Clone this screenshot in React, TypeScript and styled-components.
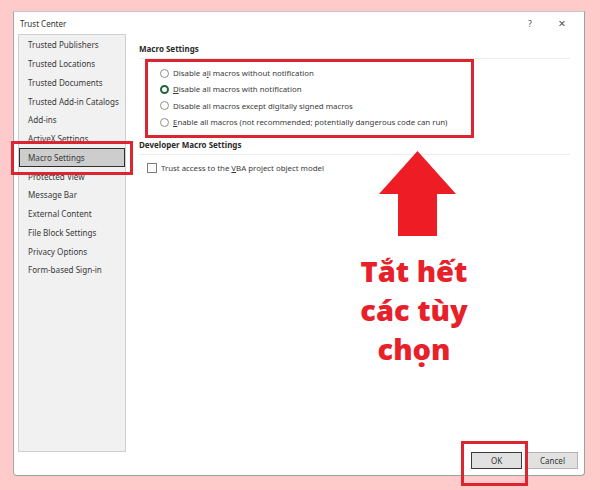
import React from "react";
import styled, { createGlobalStyle } from "styled-components";

const Global = createGlobalStyle`
  html, body { margin: 0; padding: 0; }
  body { background: #ffcaca; font-family: "Noto Sans", "Open Sans", sans-serif; }
`;

const Page = styled.div`
  position: relative;
  width: 600px;
  height: 490px;
  padding: 11px 0 0 13px;
  box-sizing: border-box;
`;

const Dialog = styled.div`
  width: 572px;
  height: 465px;
  box-sizing: border-box;
  background: #fff;
  border: 1px solid #93a79d;
  border-left-color: #a8a8a8;
  border-top-color: #c8c8c8;
  border-radius: 0 0 4px 4px;
  display: flex;
  flex-direction: column;
`;

const TitleBar = styled.div`
  height: 22px;
  display: flex;
  align-items: center;
  padding: 0 0 0 6px;
  font-size: 8px;
  color: #333;
`;

const Title = styled.div`
  flex: 1;
`;

const TitleButton = styled.div<{ $w: number }>`
  width: ${(p) => p.$w}px;
  text-align: center;
  color: #555;
  font-size: ${(p) => (p.$w > 30 ? 13 : 9)}px;
`;

const Body = styled.div`
  flex: 1;
  display: flex;
  padding-left: 4px;
  min-height: 0;
`;

const Nav = styled.div`
  width: 108px;
  height: 418px;
  box-sizing: border-box;
  background: #f1f1f1;
  border: 1px solid #cfcfcf;
  padding-top: 0.6px;
  display: flex;
  flex-direction: column;
`;

const NavItem = styled.div<{ $sel?: boolean }>`
  height: 18.75px;
  box-sizing: border-box;
  display: flex;
  align-items: center;
  padding-left: 8px;
  font-size: 8.1px;
  color: #3a3a3a;
  white-space: nowrap;
  background: ${(p) => (p.$sel ? "#cdcdcd" : "transparent")};
  border: 1px solid ${(p) => (p.$sel ? "#2f2f2f" : "transparent")};
`;

const Content = styled.div`
  flex: 1;
  padding: 9px 14px 0 13px;
  display: flex;
  flex-direction: column;
`;

const Heading = styled.div<{ $mt: number }>`
  margin-top: ${(p) => p.$mt}px;
  font-size: 8px;
  font-weight: 700;
  line-height: 12px;
  color: #2a2a2a;
  padding-bottom: 3px;
  border-bottom: 1px solid #ececec;
`;

const RadioList = styled.div`
  margin-top: 6px;
  padding-left: 21px;
  display: flex;
  flex-direction: column;
`;

const Row = styled.div<{ $h: number }>`
  height: ${(p) => p.$h}px;
  display: flex;
  align-items: center;
  gap: 4px;
  font-size: 7.85px;
  color: #3a3a3a;
  white-space: nowrap;
`;

const Radio = styled.span<{ $on?: boolean }>`
  width: 9px;
  height: 9px;
  box-sizing: border-box;
  border-radius: 50%;
  background: #fff;
  border: ${(p) => (p.$on ? "2.5px solid #236440" : "1px solid #8e8e8e")};
  flex: none;
`;

const CheckRow = styled(Row)`
  margin-top: 5px;
  padding-left: 8px;
  gap: 4px;
`;

const Check = styled.span`
  width: 10px;
  height: 10px;
  box-sizing: border-box;
  border: 1px solid #7a7a7a;
  background: #fff;
  flex: none;
`;

const Footer = styled.div`
  height: 23px;
  display: flex;
  justify-content: flex-end;
  align-items: flex-start;
  gap: 5px;
  padding: 1px 6px 0 0;
`;

const Button = styled.div<{ $def?: boolean }>`
  width: 51px;
  height: 17px;
  box-sizing: border-box;
  display: flex;
  align-items: center;
  justify-content: center;
  font-size: 8px;
  color: #333;
  background: #e1e1e1;
  border: ${(p) => (p.$def ? "1.5px solid #3a3a3a" : "1px solid #b4b4b4")};
`;

const Mark = styled.div<{ $x: number; $y: number; $w: number; $h: number }>`
  position: absolute;
  left: ${(p) => p.$x}px;
  top: ${(p) => p.$y}px;
  width: ${(p) => p.$w}px;
  height: ${(p) => p.$h}px;
  box-sizing: border-box;
  border: 3px solid #dc2530;
  pointer-events: none;
`;

const Arrow = styled.svg`
  position: absolute;
  left: 379px;
  top: 151px;
`;

const Caption = styled.div`
  position: absolute;
  left: 344px;
  top: 251px;
  width: 140px;
  text-align: center;
  font-family: "Open Sans", "Noto Sans", sans-serif;
  font-weight: 800;
  font-size: 29px;
  line-height: 39px;
  color: #e8202a;
`;

const U = styled.span`
  text-decoration: underline;
  text-underline-offset: 1px;
`;

const navItems = [
  "Trusted Publishers",
  "Trusted Locations",
  "Trusted Documents",
  "Trusted Add-in Catalogs",
  "Add-ins",
  "ActiveX Settings",
  "Macro Settings",
  "Protected View",
  "Message Bar",
  "External Content",
  "File Block Settings",
  "Privacy Options",
  "Form-based Sign-in",
];

export default function App() {
  return (
    <>
      <Global />
      <Page>
        <Dialog>
          <TitleBar>
            <Title>Trust Center</Title>
            <TitleButton $w={20}>?</TitleButton>
            <TitleButton $w={44}>×</TitleButton>
          </TitleBar>
          <Body>
            <Nav>
              {navItems.map((n) => (
                <NavItem key={n} $sel={n === "Macro Settings"}>
                  {n}
                </NavItem>
              ))}
            </Nav>
            <Content>
              <Heading $mt={0}>Macro Settings</Heading>
              <RadioList>
                <Row $h={16.33}>
                  <Radio />
                  <span>
                    Disable a<U>l</U>l macros without notification
                  </span>
                </Row>
                <Row $h={16.33}>
                  <Radio $on />
                  <span>
                    <U>D</U>isable all macros with notification
                  </span>
                </Row>
                <Row $h={16.33}>
                  <Radio />
                  <span>
                    Disable all macros except di<U>g</U>itally signed macros
                  </span>
                </Row>
                <Row $h={16.33}>
                  <Radio />
                  <span>
                    <U>E</U>nable all macros (not recommended; potentially dangerous code can run)
                  </span>
                </Row>
              </RadioList>
              <Heading $mt={9}>Developer Macro Settings</Heading>
              <CheckRow $h={16}>
                <Check />
                <span>
                  Trust access to the <U>V</U>BA project object model
                </span>
              </CheckRow>
            </Content>
          </Body>
          <Footer>
            <Button $def>OK</Button>
            <Button>Cancel</Button>
          </Footer>
        </Dialog>

        <Mark $x={145} $y={59} $w={329} $h={79} />
        <Mark $x={11} $y={141} $w={122} $h={34} />
        <Mark $x={461} $y={441} $w={67} $h={45} />

        <Arrow width="77" height="85" viewBox="0 0 77 85">
          <path d="M38.5 0 L77 43 L58 43 L58 85 L19 85 L19 43 L0 43 Z" fill="#ee1c25" />
        </Arrow>
        <Caption>
          Tắt hết
          <br />
          các tùy
          <br />
          chọn
        </Caption>
      </Page>
    </>
  );
}
